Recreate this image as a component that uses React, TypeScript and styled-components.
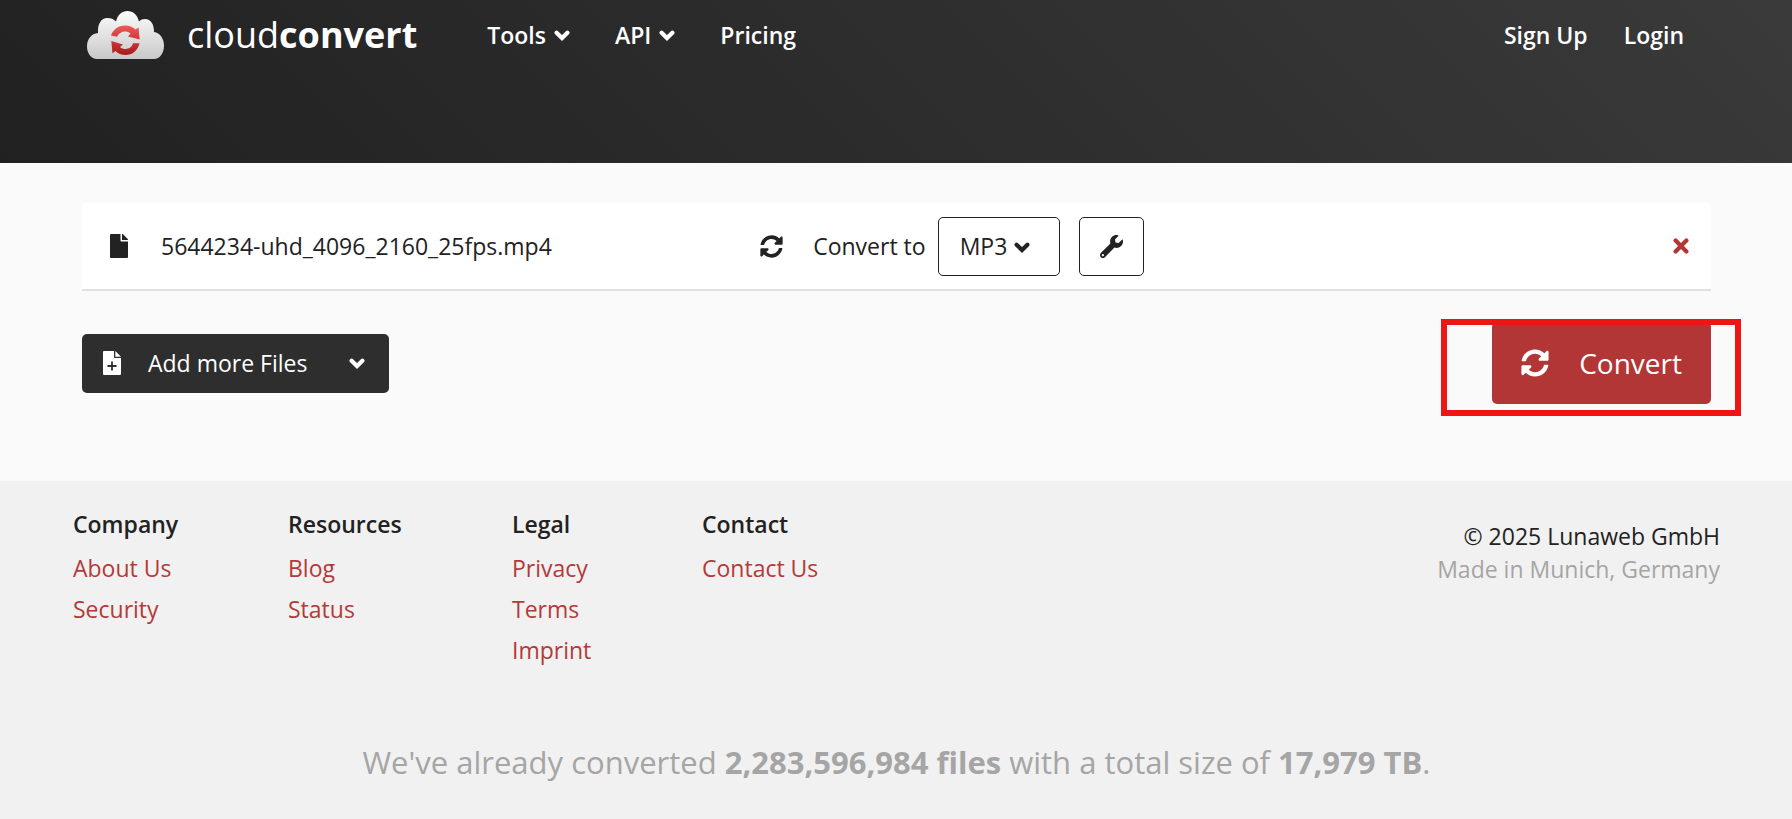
import React from "react";
import styled, { createGlobalStyle } from "styled-components";
import { FaFile, FaSyncAlt, FaWrench } from "react-icons/fa";

const GlobalStyle = createGlobalStyle`
  *, *::before, *::after { box-sizing: border-box; }
  html, body, #root { height: 100%; }
  body {
    margin: 0;
    background: #fafafa;
    color: #222;
    font: 400 23px/32px "Open Sans", sans-serif;
  }
  button, select { font: inherit; color: inherit; cursor: pointer; }
  svg { display: block; flex: none; }
`;

const Page = styled.div`
  min-height: 100%;
  display: flex;
  flex-direction: column;
`;

const Header = styled.header`
  height: 163px;
  background: linear-gradient(45deg, #212121 0%, #2d2d2d 50%, #3a3a3a 100%);
  color: #fff;
`;

const Navbar = styled.nav`
  height: 70px;
  padding: 0 108px 0 87px;
  display: flex;
  align-items: center;
`;

const Brand = styled.a`
  display: flex;
  align-items: center;
  gap: 23px;
  margin-right: 70px;
  color: inherit;
  text-decoration: none;
  font-size: 36px;
  line-height: 48px;
`;

const NavGroup = styled.div<{ $gap: number; $end?: boolean }>`
  display: flex;
  align-items: center;
  gap: ${(p) => p.$gap}px;
  margin-left: ${(p) => (p.$end ? "auto" : "0")};
`;

const NavLink = styled.a`
  color: inherit;
  font-weight: 600;
  text-decoration: none;
`;

const NavMenu = styled.button`
  display: flex;
  align-items: center;
  gap: 8px;
  padding: 0;
  border: 0;
  background: none;
  font-weight: 600;
`;

const Main = styled.main`
  padding: 40px 81px 77px 82px;
`;

const FileRow = styled.section`
  display: grid;
  grid-template-columns: 7fr 10fr;
  align-items: center;
  height: 88px;
  padding: 0 22px 0 28px;
  background: #fff;
  border-bottom: 2px solid #dfe0e0;
  border-radius: 4px 4px 0 0;
`;

const FileName = styled.div`
  display: flex;
  align-items: center;
  gap: 33px;
`;

const FileIcon = styled(FaFile)`
  width: 18px;
  height: 24px;
`;

const FormatCell = styled.div`
  display: flex;
  align-items: center;
`;

const FormatLabel = styled.label`
  display: flex;
  align-items: center;
  gap: 30px;
  margin-right: 12px;
`;

const SelectBox = styled.span`
  display: flex;
  position: relative;
  margin-right: 19px;

  svg {
    position: absolute;
    right: 30px;
    top: 25px;
    pointer-events: none;
  }
`;

const FormatSelect = styled.select`
  appearance: none;
  width: 122px;
  height: 59px;
  padding: 0 21px;
  background: #fff;
  border: 1px solid #222;
  border-radius: 5px;
`;

const OptionsButton = styled.button`
  display: flex;
  align-items: center;
  justify-content: center;
  width: 65px;
  height: 59px;
  padding: 0;
  background: #fff;
  border: 1px solid #222;
  border-radius: 5px;
`;

const RemoveButton = styled.button`
  margin-left: auto;
  padding: 0;
  border: 0;
  background: none;
  color: #b33636;
`;

const Actions = styled.div`
  display: flex;
  align-items: center;
  justify-content: space-between;
  margin-top: 31px;
`;

const AddButton = styled.button`
  display: flex;
  align-items: center;
  height: 59px;
  padding: 0 24px 0 21px;
  border: 0;
  border-radius: 5px;
  background: #2e2e2e;
  color: #fff;

  span { margin: 0 42px 0 27px; }
`;

const ConvertArea = styled.div`
  position: relative;
`;

const ConvertButton = styled.button`
  display: flex;
  align-items: center;
  gap: 30px;
  height: 82px;
  padding: 0 29px;
  border: 0;
  border-radius: 5px;
  background: #b33636;
  color: #fff;
  font-size: 28px;
`;

const Highlight = styled.div`
  position: absolute;
  inset: -3px -30px -12px -51px;
  border: 6px solid #ee1515;
  pointer-events: none;
`;

const Footer = styled.footer`
  flex: 1;
  padding: 27px 72px 32px 73px;
  background: #f1f1f1;
`;

const FooterTop = styled.div`
  display: flex;
  justify-content: space-between;
`;

const LinkColumns = styled.div`
  display: grid;
  grid-template-columns: 215px 224px 190px auto;
`;

const Heading = styled.h2`
  margin: 0 0 12px;
  font-size: 23px;
  line-height: 32px;
  font-weight: 600;
`;

const LinkList = styled.ul`
  display: grid;
  gap: 9px;
  margin: 0;
  padding: 0;
  list-style: none;
`;

const FooterLink = styled.a`
  color: #b33a3a;
  text-decoration: none;
`;

const Legal = styled.div`
  padding-top: 12px;
  line-height: 33px;
  text-align: right;
`;

const Muted = styled.div`
  color: #a5a5a5;
`;

const Stats = styled.p`
  margin: 72px 0 0;
  color: #a5a5a5;
  font-size: 31px;
  line-height: 48px;
  text-align: center;
`;

const Chevron = () => (
  <svg width="16" height="11" viewBox="0 0 16 11" aria-hidden="true">
    <path d="M2.6 2.7 8 8 13.4 2.7" fill="none" stroke="currentColor" strokeWidth="4.2" strokeLinecap="round" strokeLinejoin="miter" />
  </svg>
);

const Cross = () => (
  <svg width="16" height="16" viewBox="0 0 16 16" aria-hidden="true">
    <path d="M2.6 2.6 13.4 13.4M13.4 2.6 2.6 13.4" stroke="currentColor" strokeWidth="4.2" strokeLinecap="round" />
  </svg>
);

const FilePlus = () => (
  <svg width="18" height="24" viewBox="0 0 18 24" aria-hidden="true">
    <path d="M1 0H11V6.2Q11 7 12 7H18V23Q18 24 17 24H1Q0 24 0 23V1Q0 0 1 0ZM12.300 0 18 5.700H12.300Z" fill="currentColor" />
    <path d="M9 10.500V19.500M4.500 15H13.500" stroke="#2e2e2e" strokeWidth="1.800" />
  </svg>
);

const CloudLogo = () => (
  <svg width="77" height="48" viewBox="0 0 77 48" aria-hidden="true">
    <defs>
      <linearGradient id="cloud" x1="0" y1="0" x2="0" y2="1">
        <stop offset="0" stopColor="#fbfbfb" />
        <stop offset="1" stopColor="#c9c9c9" />
      </linearGradient>
      <linearGradient id="arrows" gradientUnits="userSpaceOnUse" x1="0" y1="15" x2="0" y2="44">
        <stop offset="0" stopColor="#ee5656" />
        <stop offset="1" stopColor="#a81c1c" />
      </linearGradient>
    </defs>
    <path d="M10 48C4 48 0 42 0 35.500C0 28 4.500 22.500 11 22C10.500 13 14 7 20.500 7C24 7 26.500 8 29 10.500C30.500 4 35 0 40.500 0C46 0 50.500 4 52 10.500C53.500 8.800 55.500 8 58 8C64 8 67 13.500 67 21C73 22 77 27.500 77 34.500C77 42 73 48 67 48Z" fill="url(#cloud)" />
    <g fill="url(#arrows)">
      <path d="M24 24.500C26 18.500 31.500 14.500 38 14.500C42 14.500 45.500 16 48.500 18.500L51.500 16.500L52.700 28.500L41 25.500L43.500 22.500C41.500 21 40 20.500 38 20.500C34.500 20.500 31.500 22.500 30 25.800Z" />
      <path d="M52.500 32.300C51 39.500 45.500 44 38.500 44C34.500 44 31 42.500 28.500 40L25.500 42.300L24.300 30L36 33.500L33 36C34.500 37.500 36.500 38 38.500 38C42 38 45 36 46 32.300Z" />
    </g>
  </svg>
);

const columns = [
  { title: "Company", links: ["About Us", "Security"] },
  { title: "Resources", links: ["Blog", "Status"] },
  { title: "Legal", links: ["Privacy", "Terms", "Imprint"] },
  { title: "Contact", links: ["Contact Us"] },
];

export default function App() {
  return (
    <Page>
      <GlobalStyle />
      <Header>
        <Navbar>
          <Brand href="#">
            <CloudLogo />
            <span>cloud<b>convert</b></span>
          </Brand>
          <NavGroup $gap={45}>
            <NavMenu type="button">Tools <Chevron /></NavMenu>
            <NavMenu type="button">API <Chevron /></NavMenu>
            <NavLink href="#">Pricing</NavLink>
          </NavGroup>
          <NavGroup $gap={36} $end>
            <NavLink href="#">Sign Up</NavLink>
            <NavLink href="#">Login</NavLink>
          </NavGroup>
        </Navbar>
      </Header>
      <Main>
        <FileRow>
          <FileName>
            <FileIcon aria-hidden="true" />
            <span>5644234-uhd_4096_2160_25fps.mp4</span>
          </FileName>
          <FormatCell>
            <FormatLabel htmlFor="format">
              <FaSyncAlt size={23} aria-hidden="true" />
              Convert to
            </FormatLabel>
            <SelectBox>
              <FormatSelect id="format" defaultValue="MP3">
                <option>MP3</option>
              </FormatSelect>
              <Chevron />
            </SelectBox>
            <OptionsButton type="button" aria-label="Options">
              <FaWrench size={23} />
            </OptionsButton>
            <RemoveButton type="button" aria-label="Remove file">
              <Cross />
            </RemoveButton>
          </FormatCell>
        </FileRow>
        <Actions>
          <AddButton type="button">
            <FilePlus />
            <span>Add more Files</span>
            <Chevron />
          </AddButton>
          <ConvertArea>
            <ConvertButton type="button">
              <FaSyncAlt size={28} aria-hidden="true" />
              Convert
            </ConvertButton>
            <Highlight />
          </ConvertArea>
        </Actions>
      </Main>
      <Footer>
        <FooterTop>
          <LinkColumns>
            {columns.map((column) => (
              <div key={column.title}>
                <Heading>{column.title}</Heading>
                <LinkList>
                  {column.links.map((link) => (
                    <li key={link}><FooterLink href="#">{link}</FooterLink></li>
                  ))}
                </LinkList>
              </div>
            ))}
          </LinkColumns>
          <Legal>
            <div>© 2025 Lunaweb GmbH</div>
            <Muted>Made in Munich, Germany</Muted>
          </Legal>
        </FooterTop>
        <Stats>
          We've already converted <b>2,283,596,984 files</b> with a total size of <b>17,979 TB</b>.
        </Stats>
      </Footer>
    </Page>
  );
}
